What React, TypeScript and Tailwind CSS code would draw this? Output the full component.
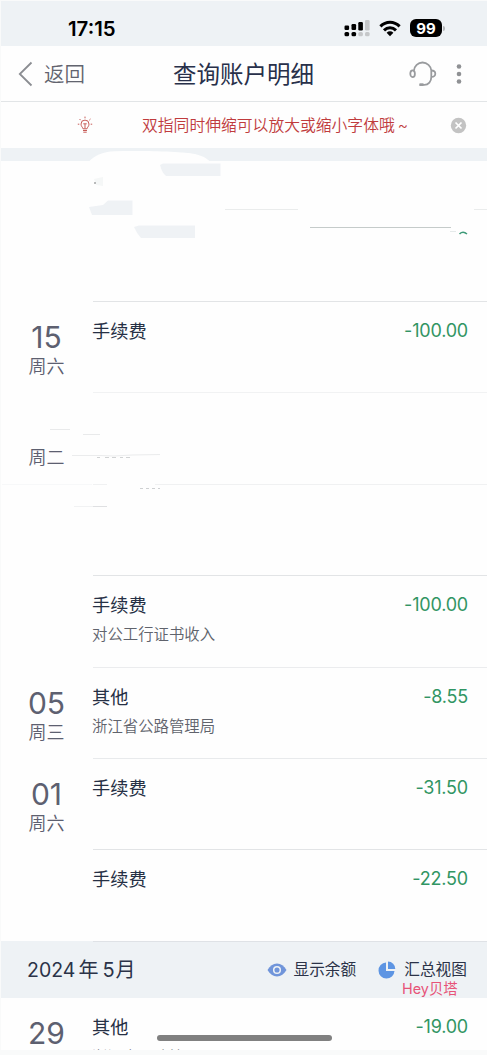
import React from "react";

type Entry = {
  day?: string;
  week?: string;
  title?: string;
  note?: string;
  amount?: string;
  line: string;
};

const entries: Entry[] = [
  { day: "15", week: "周六", title: "手续费", amount: "-100.00", line: "border-[#e2e4e6]" },
  { week: "周二", line: "border-[#f1f2f3]" },
  { line: "border-[#f0f1f2]" },
  { title: "手续费", note: "对公工行证书收入", amount: "-100.00", line: "border-[#e2e4e6]" },
  { day: "05", week: "周三", title: "其他", note: "浙江省公路管理局", amount: "-8.55", line: "border-[#ebecee]" },
  { day: "01", week: "周六", title: "手续费", amount: "-31.50", line: "border-[#e8eaec]" },
  { title: "手续费", amount: "-22.50", line: "border-[#e2e4e6]" },
];

function EntryRow({ entry }: { entry: Entry }) {
  return (
    <div className="flex h-[91.4px] shrink-0">
      <div className="flex w-[92px] shrink-0 flex-col items-center pr-[1px] pt-[20px] text-[#5d6070]">
        <div className="h-[32px] text-[30px] leading-[32px]">{entry.day}</div>
        <div className="mt-[4px] text-[18px] font-[350] leading-[20px]">{entry.week}</div>
      </div>
      <div className={`flex flex-1 justify-between border-t pr-[19px] pt-[17px] ${entry.line}`}>
        <div className="-ml-px pt-px">
          <div className="h-[22px] text-[18.200px] leading-[22px] text-[#263045]">{entry.title}</div>
          <div className="mt-[9px] text-[15.4px] font-[350] leading-[20px] text-[#60636c]">{entry.note}</div>
        </div>
        <div className="text-[18px] leading-[23px] tracking-[-0.2px] text-[#319563]">{entry.amount}</div>
      </div>
    </div>
  );
}

function Signal() {
  return (
    <svg width="26" height="18" viewBox="0 0 26 18">
      <g fill="#000">
        <rect x="0.5" y="6.5" width="4.6" height="4.5" rx="1.2" />
        <rect x="7.5" y="5" width="4.6" height="6" rx="1.2" />
        <rect x="14.3" y="3" width="4.6" height="8.5" rx="1.2" />
        <rect x="0.5" y="13" width="4.6" height="4.2" rx="1.5" />
        <rect x="7.5" y="13" width="4.6" height="4.2" rx="1.5" />
      </g>
      <g fill="#c5c7c9">
        <rect x="21" y="1" width="4.6" height="10.5" rx="1.2" />
        <rect x="14.3" y="13" width="4.6" height="4.2" rx="1.5" />
        <rect x="21" y="13" width="4.6" height="4.2" rx="1.5" />
      </g>
    </svg>
  );
}

function Wifi() {
  return (
    <svg width="22" height="17" viewBox="0 0 22 17">
      <g fill="none" stroke="#000" strokeWidth="3">
        <path d="M1.4 6.4C7 .8 15 .8 20.6 6.4" />
        <path d="M5 10.4c3.5-3.5 8.500-3.500 12 0" />
      </g>
      <path d="M7.600 12.700c2-1.800 4.800-1.800 6.800 0L11 16.200z" />
    </svg>
  );
}

function Headset() {
  return (
    <svg width="28" height="26" viewBox="0 0 28 26" fill="none" stroke="#999b9e" strokeWidth="1.8">
      <path d="M5 9.500C5.200 5 9 1.500 13.500 1.500S22 5 22.300 9.500V16c0 4.500-2.800 7.800-7 7.800H10.500" />
      <path d="M10.500 23.600h4" strokeWidth="2.600" />
      <ellipse cx="3.600" cy="12.700" rx="2.300" ry="3.400" />
      <path d="M22.300 9.500c2.400-.2 4 1.200 4 3.200s-1.600 3.400-4 3.200" />
    </svg>
  );
}

function Bulb() {
  return (
    <svg width="16" height="18" viewBox="0 0 16 18" fill="none" stroke="#c75c58" strokeWidth="1">
      <path d="M6 12.800C5.800 11.300 4 10.500 4 8.100a4 4 0 0 1 8 0c0 2.400-1.800 3.200-2 4.700zM6 14.500h4M6.300 16.200h3.400M8 8v4.500M6.300 7.800h3.400M8 .6v1.700M2.500 3l1.200 1.200M13.500 3l-1.200 1.200M.8 8.200h1.500M13.700 8.200h1.500" />
    </svg>
  );
}

/* Erased areas of the statement: leftover strokes and patches */
function Smudges() {
  return (
    <svg className="pointer-events-none absolute -left-px -top-px" width="487" height="560" viewBox="0 0 487 560">
      <path d="M89 161.500C94 156 102 151.500 115 151.200C145 150.500 183 151.500 195 154C205 156.500 207 159 210 161.500z" fill="#fefefe" />
      <g fill="#eff2f5">
        <path d="M160 165l3-1.500h57.500V176H166q-4-3-6-11z" />
        <path d="M89 207l14-2 5-4.500h24.500V215H92z" />
        <path d="M134 227l5-1.500h56V238h-54q-4-4-7-11z" />
        <path d="M94 179l9-2v9l-7-1z" fill="#f5f7f7" />
      </g>
      <path d="M94 183h2" stroke="#77797b" />
      <g fill="none" strokeWidth="1">
        <path d="M225 209.500h73M474 209.500h13" stroke="#eaecec" />
        <path d="M310 227.500h141" stroke="#c5cbca" />
        <path d="M450 231.500h6" stroke="#e5eaea" />
        <path d="M459.500 234q3.500-3.500 7.500 0" stroke="#3c9a78" strokeWidth="1.500" />
        <path d="M50 429.500h20M83 434.500h17" stroke="#e9eaeb" />
        <path d="M72 455.500h28l14 .5 18-1 28-.5" stroke="#ebeced" />
        <path d="M97 457.500h3m5 0h4m3 0h4m4 0h3m3 0h4" stroke="#d1d3d4" />
        <path d="M140 488.500h3m3 0h3m3 0h3m3 0h2" stroke="#ced0d2" />
        <path d="M74 506.500h19" stroke="#f1f2f3" />
        <path d="M93 506.500h14" stroke="#dfe0e2" />
      </g>
      <path d="M107 483h48v3h-48z" fill="#fefefe" />
      <path d="M2 484.500h90" stroke="#f7f8f9" />
    </svg>
  );
}

export default function App() {
  return (
    <div
      className="relative flex h-[1055px] w-[487px] flex-col overflow-hidden border-l border-t border-[#f9fafa] bg-[#fefefe]"
      style={{ fontFamily: 'Inter, "Noto Sans CJK SC", sans-serif' }}
    >
      <div className="flex h-[45px] shrink-0 items-start justify-between bg-[#eef2f5] pl-[67px] pr-[42px] pt-[16px]">
        <div className="text-[20.400px] font-semibold leading-[24px] text-black">17:15</div>
        <div className="flex items-center gap-[9px] pt-[2px]">
          <Signal />
          <Wifi />
          <div className="flex items-center gap-[1px]">
            <div className="flex h-[18px] w-[32px] items-center justify-center rounded-[6px] bg-black text-[15px] font-bold leading-none text-white">99</div>
            <div className="h-[5px] w-[2px] rounded-r bg-[#b5b7b9]" />
          </div>
        </div>
      </div>

      <header className="flex h-[56px] shrink-0 items-center border-b border-[#e2e5e7] pl-[17px] pr-[25px]">
        <div className="flex w-[155px] items-center gap-[11px]">
          <svg width="15" height="26" viewBox="0 0 15 26" fill="none" stroke="#8b8d92" strokeWidth="1.800">
            <path d="M13.500 1.500L1.800 13l11.700 11.500" />
          </svg>
          <span className="pt-[2px] text-[20.5px] font-[350] leading-[26px] text-[#62646f]">返回</span>
        </div>
        <h1 className="flex-1 whitespace-nowrap pt-[2px] text-[23.500px] leading-[30px] text-[#28304a]">查询账户明细</h1>
        <div className="flex items-center gap-[19px]">
          <Headset />
          <svg width="6" height="20" viewBox="0 0 6 20" fill="#8f9194">
            <circle cx="3" cy="2.500" r="2.300" />
            <circle cx="3" cy="10" r="2.300" />
            <circle cx="3" cy="17.500" r="2.300" />
          </svg>
        </div>
      </header>

      <div className="flex h-[46px] shrink-0 items-center pl-[76px] pr-[20px]">
        <Bulb />
        <div className="ml-[49px] flex-1 whitespace-nowrap pt-[2px] text-[15.800px] font-[350] leading-[22px] text-[#c03b3d]">
          双指同时伸缩可以放大或缩小字体哦<span className="ml-[3px]">~</span>
        </div>
        <svg width="17" height="17" viewBox="0 0 17 17">
          <circle cx="8.500" cy="8.500" r="7.700" fill="#c3c3c3" />
          <path d="M5.500 5.500l6 6m0-6l-6 6" stroke="#fff" strokeWidth="1.700" />
        </svg>
      </div>

      <div className="h-[13px] shrink-0 bg-[#eef2f5]" />
      <div className="h-[140px] shrink-0" />
      {entries.map((entry, i) => (
        <EntryRow key={i} entry={entry} />
      ))}

      <div className="flex h-[57.200px] shrink-0 bg-[#eef2f5]">
        <div className="w-[92px]" />
        <div className="flex-1 border-t border-[#dfe2e6]" />
      </div>
      <div className="-mt-[57px] flex h-[57px] shrink-0 items-center pl-[26px] pr-[20px] pt-[2px] text-[#2b3348]">
        <div className="flex items-baseline text-[20px] leading-[26px]">
          <span className="text-[19.500px]">2024</span>
          <span className="ml-[3px]">年</span>
          <span className="ml-[4px]">5</span>
          <span className="ml-[1px]">月</span>
        </div>
        <div className="ml-auto flex items-center text-[15.700px] leading-[22px]">
          <svg width="20" height="14" viewBox="0 0 20 14">
            <path d="M.5 7C3 2.800 6 .5 10 .5S17 2.800 19.500 7C17 11.200 14 13.500 10 13.500S3 11.200.5 7z" fill="#7095da" />
            <circle cx="10" cy="7" r="3.300" fill="#7095da" stroke="#eef2f5" strokeWidth="1.500" />
          </svg>
          <span className="ml-[7px]">显示余额</span>
          <svg className="ml-[22px]" width="18" height="18" viewBox="0 0 18 18" fill="#5d95e3">
            <path d="M8 1.500V10h8.500A8 8 0 1 1 8 1.500z" />
            <path d="M10 .5A7.500 7.500 0 0 1 17.300 8H10z" />
          </svg>
          <span className="ml-[8px]">汇总视图</span>
        </div>
      </div>

      <div className="flex h-[52px] shrink-0 overflow-hidden">
        <div className="w-[92px] pr-[1px] pt-[19px] text-center text-[30px] leading-[32px] text-[#5d6070]">29</div>
        <div className="flex flex-1 justify-between pr-[19px] pt-[17px]">
          <div className="-ml-px pt-px">
            <div className="text-[18.200px] leading-[22px] text-[#263045]">其他</div>
            <div className="mt-[10px] text-[15.400px] font-[350] leading-[20px] text-[#60636c]">浙江省公路管理局</div>
          </div>
          <div className="text-[18px] leading-[23px] tracking-[-0.2px] text-[#319563]">-19.00</div>
        </div>
      </div>
      <div className="flex-1 bg-[#f9fafa]" />

      <Smudges />
      <div className="absolute left-[401px] top-[979px] whitespace-nowrap text-[14.400px] leading-[18px] text-[#e75378]">Hey贝塔</div>
      <div className="absolute left-[156px] top-[1034px] h-[6px] w-[175px] rounded-full bg-[#808080]" />
    </div>
  );
}
